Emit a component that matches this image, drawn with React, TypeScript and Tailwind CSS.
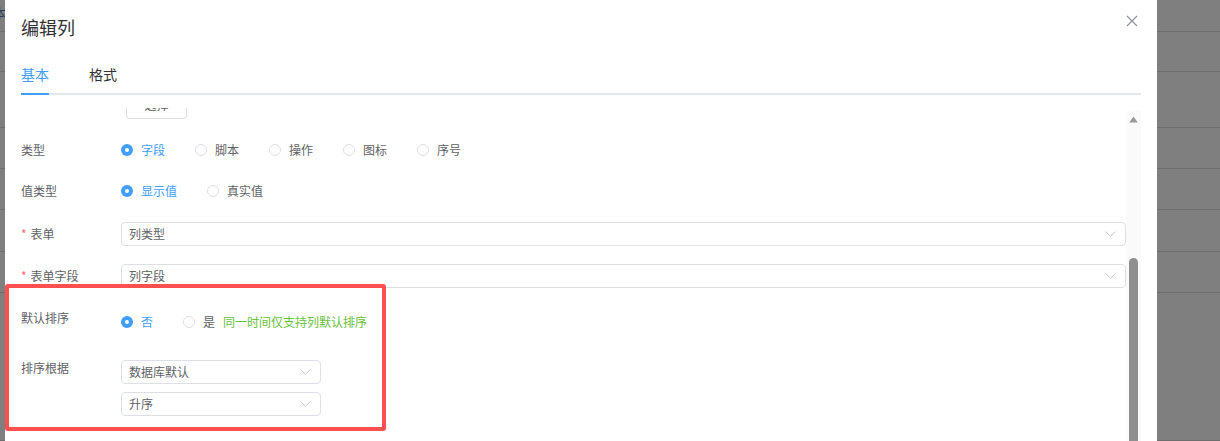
import React from "react";

const font = { fontFamily: '"Noto Sans CJK SC", "Noto Sans", sans-serif' };

function Radio({ checked, label, last }: { checked?: boolean; label: string; last?: boolean }) {
  return (
    <div className={"flex items-center " + (last ? "" : "mr-[30px]")}>
      {checked ? (
        <span className="w-[12px] h-[12px] rounded-full bg-[#409eff] flex items-center justify-center">
          <span className="w-[4px] h-[4px] rounded-full bg-white" />
        </span>
      ) : (
        <span className="w-[12px] h-[12px] rounded-full border border-[#dcdfe6] bg-white" />
      )}
      <span className={"ml-[8px] text-[12px] leading-[14px] " + (checked ? "text-[#409eff]" : "text-[#606266]")}>{label}</span>
    </div>
  );
}

function Chevron() {
  return (
    <svg width="11" height="6" viewBox="0 0 11 6" fill="none">
      <path d="M0.5 0.5 L5.5 5.2 L10.5 0.5" stroke="#c0c4cc" strokeWidth="1" />
    </svg>
  );
}

function Select({ value, wide }: { value: string; wide?: boolean }) {
  return (
    <div
      className={
        "h-[24px] border border-[#dcdfe6] rounded-[4px] bg-white flex items-center justify-between pl-[7px] pr-[9px] " +
        (wide ? "flex-1" : "w-[200px]")
      }
    >
      <span className="text-[12px] text-[#606266] leading-[14px]">{value}</span>
      <Chevron />
    </div>
  );
}

function Label({ text, required }: { text: string; required?: boolean }) {
  return (
    <div className="w-[100px] shrink-0 flex items-center text-[12px] leading-[14px] text-[#606266]">
      {required && <span className="text-[#f56c6c] mr-[4px]">*</span>}
      {text}
    </div>
  );
}

export default function App() {
  const bgLines = [32, 40, 56, 41, 41, 42, 41, 148];
  return (
    <div className="relative w-[1220px] h-[441px] overflow-hidden bg-[#7f7f7f]" style={font}>
      {/* background page rows */}
      <div className="flex flex-col">
        {bgLines.map((h, i) => (
          <div
            key={i}
            className="border-b border-[#6e6e6e] relative"
            style={{ height: h }}
          >
            {i === 0 && (
              <span className="absolute left-[-7px] top-[3px] text-[13px] text-[#2b3a55]">本</span>
            )}
          </div>
        ))}
      </div>

      {/* dialog */}
      <div className="absolute left-[5px] top-0 w-[1152px] h-[441px] bg-white flex flex-col px-4">
        <div className="h-[54px] pt-[15px] flex justify-between">
          <span className="text-[18px] leading-[24px] text-[#303133]">编辑列</span>
          <svg className="mt-[0px] mr-[3px]" width="12" height="12" viewBox="0 0 12 12">
            <path d="M1 1 L11 11 M11 1 L1 11" stroke="#909399" strokeWidth="1.2" />
          </svg>
        </div>

        {/* tabs */}
        <div className="h-[41px] border-b-2 border-[#e4e7ed] flex gap-[40px] items-end">
          <div className="relative h-[41px] flex items-center pt-[2px]">
            <span className="text-[14px] leading-[16px] text-[#409eff]">基本</span>
            <span className="absolute left-0 right-0 bottom-[-2px] h-[2px] bg-[#409eff]" />
          </div>
          <div className="h-[41px] flex items-center pt-[2px]">
            <span className="text-[14px] leading-[16px] text-[#303133]">格式</span>
          </div>
        </div>

        {/* scroll area */}
        <div className="mt-[13px] flex flex-1 overflow-hidden">
          <div className="flex-1 flex flex-col overflow-hidden">
            <div className="mt-[-17px] flex flex-col">
              <div className="h-[28px] pl-[105px] flex">
                <div className="h-[28px] w-[61px] border border-[#dcdfe6] rounded-[3px] flex items-center justify-center text-[12px] text-[#606266]">
                  选择
                </div>
              </div>

              <div className="mt-[19px] h-[24px] flex items-center">
                <Label text="类型" />
                <Radio checked label="字段" />
                <Radio label="脚本" />
                <Radio label="操作" />
                <Radio label="图标" />
                <Radio label="序号" last />
              </div>

              <div className="mt-[17px] h-[24px] flex items-center">
                <Label text="值类型" />
                <Radio checked label="显示值" />
                <Radio label="真实值" last />
              </div>

              <div className="mt-[19px] h-[24px] flex items-center">
                <Label text="表单" required />
                <Select value="列类型" wide />
              </div>

              <div className="mt-[18px] h-[24px] flex items-center">
                <Label text="表单字段" required />
                <Select value="列字段" wide />
              </div>

              <div className="mt-[22px] h-[24px] flex items-start">
                <div className="w-[100px] shrink-0 pt-[1px] text-[12px] leading-[14px] text-[#606266]">默认排序</div>
                <div className="h-[24px] flex items-center">
                  <Radio checked label="否" />
                  <Radio label="是" last />
                  <span className="ml-[8px] text-[12px] leading-[14px] text-[#67c23a]">同一时间仅支持列默认排序</span>
                </div>
              </div>

              <div className="mt-[26px] flex items-start">
                <div className="w-[100px] shrink-0 pt-[1px] text-[12px] leading-[14px] text-[#606266]">排序根据</div>
                <div className="flex flex-col gap-[8px]">
                  <Select value="数据库默认" />
                  <Select value="升序" />
                </div>
              </div>
            </div>
          </div>

          {/* scrollbar */}
          <div className="w-[15px] shrink-0 mt-[3px] bg-[#fafafa] flex flex-col items-center">
            <svg className="mt-[5px]" width="9" height="7" viewBox="0 0 9 7">
              <path d="M4.5 0.5 L8.8 6.5 L0.2 6.5 Z" fill="#9a9a9a" />
            </svg>
            <div className="mt-[135px] w-[9px] flex-1 rounded-t-[5px] bg-[#8f8f8f]" />
          </div>
        </div>
      </div>

      {/* red annotation box */}
      <div className="absolute left-[5px] top-[284px] w-[381px] h-[147px] border-[4px] border-[#ff5050] rounded-[3px]" />
    </div>
  );
}
